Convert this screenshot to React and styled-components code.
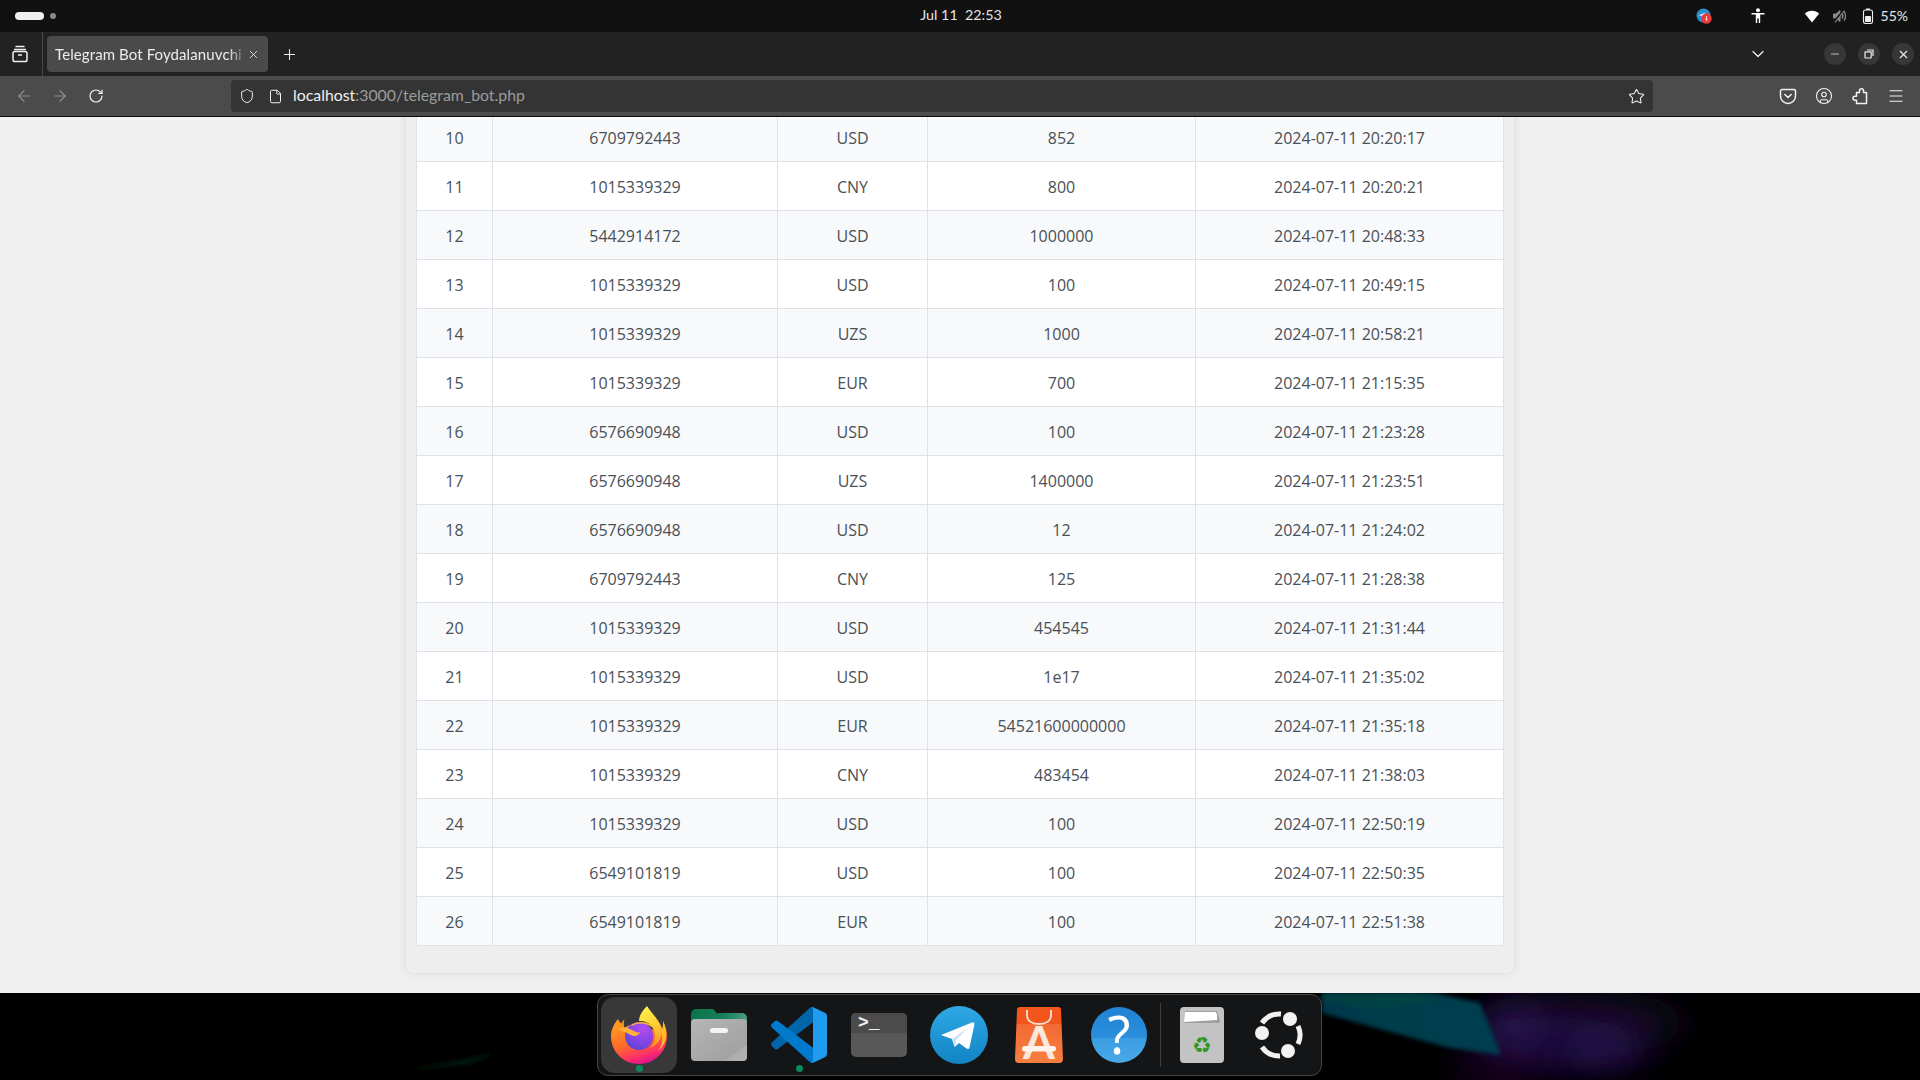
import React from 'react';
import styled, { createGlobalStyle } from 'styled-components';
import { ArrowLeft, ArrowRight, RotateCw, Shield, File, Star, Menu, Minus, X, Plus, ChevronDown, CircleUser } from 'lucide-react';

const GlobalStyle = createGlobalStyle`
  html, body {
    margin: 0;
    padding: 0;
    background: #000;
  }
`;

const Screen = styled.div`
  width: 1920px;
  height: 1080px;
  display: flex;
  flex-direction: column;
  overflow: hidden;
  font-family: "Noto Sans", sans-serif;
`;

/* gnome top bar */
const TopBar = styled.header`
  height: 32px;
  flex: none;
  background: #111;
  display: grid;
  grid-template-columns: 1fr auto 1fr;
  align-items: center;
  color: #e4e4e4;
`;

const Workspaces = styled.div`
  display: flex;
  align-items: center;
  gap: 6px;
  padding-left: 15px;
`;

const Pill = styled.span`
  width: 29px;
  height: 8px;
  border-radius: 4px;
  background: #eee;
`;

const Dot = styled.span`
  width: 6px;
  height: 6px;
  border-radius: 50%;
  background: #8a8a8a;
`;

const Clock = styled.div`
  font-family: "Lato", sans-serif;
  font-size: 14.3px;
  white-space: pre;
  position: relative;
  top: -2px;
  left: 1px;
`;

const Tray = styled.div`
  display: flex;
  align-items: center;
  justify-content: flex-end;
  padding-right: 12px;
`;

const TraySlot = styled.span`
  width: 16px;
  height: 16px;
  display: flex;
  margin-left: ${p => p.$gap}px;
`;

const Battery = styled.span`
  font-family: "Lato", sans-serif;
  font-size: 14px;
  margin-left: 5px;
  color: #e8e8e8;
  position: relative;
  top: -1px;
`;

/* firefox tab strip */
const TabStrip = styled.div`
  height: 44px;
  flex: none;
  background: #222;
  display: flex;
  align-items: center;
  color: #eee;
`;

const ViewButton = styled.div`
  width: 43px;
  height: 44px;
  display: flex;
  align-items: center;
  justify-content: center;
  padding-right: 3px;
  box-sizing: border-box;
  border-right: 1px solid #494949;
`;

const Tab = styled.div`
  width: 221px;
  height: 36px;
  margin-left: 4px;
  border-radius: 4px;
  background: #4a4a4a;
  display: flex;
  align-items: center;
  padding: 0 8px;
  box-sizing: border-box;
`;

const TabTitle = styled.span`
  flex: 1;
  overflow: hidden;
  white-space: nowrap;
  font-family: "Lato", sans-serif;
  font-size: 15px;
  letter-spacing: 0.1px;
  color: #ececec;
  -webkit-mask-image: linear-gradient(to right, #000 90%, transparent);
  mask-image: linear-gradient(to right, #000 90%, transparent);
`;

const NewTab = styled.div`
  width: 36px;
  height: 36px;
  margin-left: 3px;
  display: flex;
  align-items: center;
  justify-content: center;
`;

const Spring = styled.div`
  flex: 1;
`;

const TabList = styled.div`
  width: 36px;
  height: 36px;
  margin-right: 48px;
  display: flex;
  align-items: center;
  justify-content: center;
`;

const WinControls = styled.div`
  display: flex;
  gap: 12px;
  padding-right: 6px;
`;

const WinButton = styled.div`
  width: 22px;
  height: 22px;
  border-radius: 50%;
  background: #373737;
  display: flex;
  align-items: center;
  justify-content: center;
`;

/* nav bar */
const NavBar = styled.div`
  height: 41px;
  flex: none;
  box-sizing: border-box;
  background: #4b4b4b;
  border-bottom: 1px solid #0c0c0c;
  display: flex;
  align-items: center;
  padding-left: 6px;
  color: #f2f2f2;
`;

const NavButton = styled.div`
  width: 36px;
  height: 36px;
  display: flex;
  align-items: center;
  justify-content: center;
  color: ${p => (p.$off ? '#8f8f8f' : '#f2f2f2')};
`;

const UrlBar = styled.div`
  width: 1422px;
  height: 32px;
  margin-left: 117px;
  margin-right: 117px;
  border-radius: 4px;
  background: #343434;
  display: flex;
  align-items: center;
  padding: 0 8px 0 7px;
  box-sizing: border-box;
`;

const UrlIcon = styled.span`
  width: 18px;
  display: flex;
  justify-content: center;
  margin-right: ${p => p.$gap || 0}px;
`;

const UrlText = styled.div`
  flex: 1;
  font-family: "Lato", sans-serif;
  font-size: 15.85px;
  line-height: 20px;
  padding-bottom: 2px;
  color: #9c9c9c;
  white-space: nowrap;
  b {
    font-weight: 400;
    color: #f0f0f0;
  }
`;

/* page */
const Viewport = styled.main`
  flex: 1;
  min-height: 0;
  overflow: hidden;
  background: #f0f0f0;
`;

const Card = styled.section`
  width: 1108px;
  margin: -5px auto 0;
  padding: 0 11px 27px 10px;
  box-sizing: border-box;
  background: #eee;
  border-radius: 0 0 8px 8px;
  box-shadow: 0 0 10px rgba(0, 0, 0, 0.1);
`;

const Table = styled.table`
  width: 1087px;
  table-layout: fixed;
  border-collapse: collapse;
  font-family: "Open Sans", sans-serif;
  font-size: 16px;
  color: #495057;
`;

const Row = styled.tr`
  height: 49px;
  background: ${p => (p.$striped ? '#f8f9fa' : '#fff')};
`;

const Cell = styled.td`
  padding: 2px 0 0;
  text-align: center;
  border: 1px solid #dee2e6;
`;

/* dock */
const DockStrip = styled.footer`
  position: relative;
  height: 87px;
  flex: none;
  background: #000;
  overflow: hidden;
`;

const Wallpaper = styled.svg`
  position: absolute;
  inset: 0;
`;

const Dock = styled.nav`
  position: absolute;
  left: 597px;
  top: 1px;
  width: 725px;
  height: 82px;
  box-sizing: border-box;
  padding: 1px;
  display: flex;
  align-items: center;
  background: #141516;
  border: 1px solid #454545;
  border-radius: 11px;
`;

const DockItem = styled.div`
  position: relative;
  width: 80px;
  height: 76px;
  flex: none;
  display: flex;
  align-items: center;
  justify-content: center;
  margin-left: ${p => p.$shift || 0}px;
  &::before {
    content: '';
    position: absolute;
    left: 2px;
    right: 2px;
    top: 0;
    bottom: 0;
    border-radius: 14px;
    background: ${p => (p.$active ? '#383838' : 'transparent')};
  }
  svg {
    position: relative;
    overflow: visible;
  }
`;

const Running = styled.span`
  position: absolute;
  left: 37px;
  bottom: 1px;
  width: 7px;
  height: 7px;
  border-radius: 50%;
  background: #0a8a5c;
`;

const DockSep = styled.div`
  width: 1px;
  height: 64px;
  flex: none;
  margin: 0 1px;
  background: #3d3d3d;
`;

const rows = [
  [10, '6709792443', 'USD', '852', '2024-07-11 20:20:17'],
  [11, '1015339329', 'CNY', '800', '2024-07-11 20:20:21'],
  [12, '5442914172', 'USD', '1000000', '2024-07-11 20:48:33'],
  [13, '1015339329', 'USD', '100', '2024-07-11 20:49:15'],
  [14, '1015339329', 'UZS', '1000', '2024-07-11 20:58:21'],
  [15, '1015339329', 'EUR', '700', '2024-07-11 21:15:35'],
  [16, '6576690948', 'USD', '100', '2024-07-11 21:23:28'],
  [17, '6576690948', 'UZS', '1400000', '2024-07-11 21:23:51'],
  [18, '6576690948', 'USD', '12', '2024-07-11 21:24:02'],
  [19, '6709792443', 'CNY', '125', '2024-07-11 21:28:38'],
  [20, '1015339329', 'USD', '454545', '2024-07-11 21:31:44'],
  [21, '1015339329', 'USD', '1e17', '2024-07-11 21:35:02'],
  [22, '1015339329', 'EUR', '54521600000000', '2024-07-11 21:35:18'],
  [23, '1015339329', 'CNY', '483454', '2024-07-11 21:38:03'],
  [24, '1015339329', 'USD', '100', '2024-07-11 22:50:19'],
  [25, '6549101819', 'USD', '100', '2024-07-11 22:50:35'],
  [26, '6549101819', 'EUR', '100', '2024-07-11 22:51:38'],
];

const colWidths = [76, 285, 150, 268, 308];

function TelegramTray() {
  return (
    <svg width="16" height="16" viewBox="0 0 16 16">
      <circle cx="7.5" cy="7.5" r="7" fill="#2a8fd0" />
      <path d="M2.5 7.5 9 4.8 8 9 6.6 7.8z" fill="#fff" />
      <circle cx="10.5" cy="10.5" r="5.2" fill="#e93a3a" />
      <path d="M10.5 8v5M9.2 11h2.6" stroke="#ffc9c9" strokeWidth="1" fill="none" />
    </svg>
  );
}

function PersonTray() {
  return (
    <svg width="16" height="16" viewBox="0 0 16 16" fill="#fff">
      <circle cx="8" cy="2.2" r="2" />
      <path d="M1.5 5h13v1.6H10.2V15H8.8v-4.5H7.2V15H5.8V6.6H1.5z" />
    </svg>
  );
}

function WifiTray() {
  return (
    <svg width="16" height="16" viewBox="0 0 16 16" fill="#fff">
      <path d="M8 14.5 0.8 5.6C2.6 3.9 5.2 2.8 8 2.8s5.4 1.1 7.2 2.8z" />
    </svg>
  );
}

function MuteTray() {
  return (
    <svg width="16" height="16" viewBox="0 0 16 16" fill="none" stroke="#8a8a8a">
      <path d="M1.5 6h2.6L8 2.5v11L4.1 10H1.5z" fill="#8a8a8a" />
      <path d="M10 5.5c1 1.4 1 3.6 0 5M12 3.5c2 2.5 2 6.5 0 9" strokeWidth="1.3" />
      <path d="M2 14 12 2" stroke="#111" strokeWidth="2" />
      <path d="M3 14.5 12.5 2.5" strokeWidth="1.2" />
    </svg>
  );
}

function BatteryTray() {
  return (
    <svg width="16" height="16" viewBox="0 0 16 16" fill="none">
      <rect x="3.5" y="2" width="9" height="13.5" rx="2" stroke="#eee" strokeWidth="1.1" />
      <rect x="6" y="0.5" width="4" height="1.5" fill="#eee" />
      <rect x="5" y="8" width="6" height="6" rx="0.8" fill="#eee" />
    </svg>
  );
}

function ViewIcon() {
  return (
    <svg width="18" height="18" viewBox="0 0 18 18" fill="none" stroke="#f0f0f0" strokeWidth="1.5">
      <path d="M4.5 1.5h9" />
      <path d="M3 4.5h12" />
      <rect x="2" y="6.5" width="14" height="10" rx="1.8" />
      <path d="M7 10h4" />
    </svg>
  );
}

function RestoreIcon() {
  return (
    <svg width="10" height="10" viewBox="0 0 10 10" fill="none" stroke="#eee" strokeWidth="1.2">
      <rect x="1" y="2.8" width="6.2" height="6.2" rx="0.5" />
      <path d="M3 1h6v6" />
    </svg>
  );
}

function PocketIcon() {
  return (
    <svg width="18" height="18" viewBox="0 0 18 18" fill="none" stroke="#f2f2f2" strokeWidth="1.5">
      <path d="M3 2.5h12A1.5 1.5 0 0 1 16.5 4v5a7.5 7.5 0 0 1-15 0V4A1.5 1.5 0 0 1 3 2.5z" />
      <path d="M5.8 7.5 9 10.5l3.2-3" strokeLinecap="round" />
    </svg>
  );
}

function PuzzleIcon() {
  return (
    <svg width="18" height="18" viewBox="0 0 18 18" fill="none" stroke="#f2f2f2" strokeWidth="1.5" strokeLinejoin="round">
      <path d="M5.5 5.5h3V3.7a2 2 0 1 1 4 0v1.8h3v11H5.5v-3.3H4a2 2 0 1 1 0-4h1.5z" />
    </svg>
  );
}

function Firefox() {
  return (
    <svg width="58" height="60" viewBox="0 0 58 60">
      <defs>
        <linearGradient id="ffBody" x1="0.2" y1="0.1" x2="0.55" y2="1">
          <stop offset="0" stopColor="#ff9a1f" />
          <stop offset="0.5" stopColor="#ff6a2a" />
          <stop offset="0.82" stopColor="#ff2f6a" />
          <stop offset="1" stopColor="#e0148c" />
        </linearGradient>
        <linearGradient id="ffFlame" x1="0.4" y1="0" x2="0.7" y2="1">
          <stop offset="0" stopColor="#fff04f" />
          <stop offset="0.55" stopColor="#ffc92e" />
          <stop offset="1" stopColor="#ff8f24" />
        </linearGradient>
        <radialGradient id="ffGlobe" cx="0.65" cy="0.25" r="0.9">
          <stop offset="0" stopColor="#b24cf0" />
          <stop offset="0.55" stopColor="#8244e6" />
          <stop offset="1" stopColor="#4d48cc" />
        </radialGradient>
      </defs>
      <path d="M8 14C3 20 1 26 1 31c0 16 12.5 28 28 28s28-12 28-28c0-5-1.5-10-4-15 .4 4-.2 7-1.5 10L20 20c-2 .5-4 1.5-5.5 3-1-3-1-6 0-9-1 1-2.5 3-3 4.5C10 17.5 9 16 8 14z" fill="url(#ffBody)" />
      <path d="M37 1c-5 5-8 10-8 15 9-1 16 6 16 15 0 5-2 9-5 12 7-3 12-9 12-17 0-1 0-2-.2-3C49 15 43 10 37 1z" fill="url(#ffFlame)" />
      <path d="M53 16c2.5 5 4 11 3 17-1 5-4 10-8 13 4-5 5-11 3.5-20 1-3 1.8-6 1.5-10z" fill="#ffb92e" />
      <circle cx="29" cy="31" r="14" fill="url(#ffGlobe)" />
      <path d="M21 20c5-3 11-4 16-2 4 1 7 4 9 8-3-4-7-6-11-7-5-1-10 0-13 2z" fill="#ffb52e" />
      <path d="M8 24c4-1.5 8-2 11-.5 2 1 4 2 6 3 2 1 4 1.5 5.5 0-1 3-4 5-7 4.5-2-.3-3.5-1.5-5.5-2.5-3-1.5-6-2.5-10-4.5z" fill="#ffb13a" />
    </svg>
  );
}

function FilesIcon() {
  return (
    <svg width="56" height="52" viewBox="0 0 56 52">
      <defs>
        <linearGradient id="folderBody" x1="0" y1="0" x2="1" y2="1">
          <stop offset="0" stopColor="#b6b6b6" />
          <stop offset="0.8" stopColor="#a2a2a2" />
          <stop offset="0.8" stopColor="#acacac" />
          <stop offset="1" stopColor="#b4b4b4" />
        </linearGradient>
        <linearGradient id="folderBack" x1="0" y1="0" x2="1" y2="0">
          <stop offset="0" stopColor="#0b7349" />
          <stop offset="0.6" stopColor="#16805a" />
          <stop offset="1" stopColor="#4a9c80" />
        </linearGradient>
      </defs>
      <path d="M0 5a5 5 0 0 1 5-5h16c2 0 3 2 4 3.5S27 4 29 4h22a5 5 0 0 1 5 5v12H0z" fill="url(#folderBack)" />
      <rect y="10" width="56" height="42" rx="4" fill="url(#folderBody)" />
      <rect x="19" y="19" width="18" height="5" rx="2.5" fill="#f4f4f4" />
    </svg>
  );
}

function VsCode() {
  return (
    <svg width="56" height="56" viewBox="0 0 100 100" preserveAspectRatio="none">
      <path d="M96.5 10.8 75.9.9c-2.4-1.2-5.2-.7-7.1 1.2L1.4 63.6c-1.8 1.7-1.8 4.5 0 6.2l5.5 5c1.5 1.3 3.7 1.4 5.3.2L93.4 13.2c2.7-2.1 6.6-.1 6.6 3.3v-.2c0-2.4-1.4-4.6-3.5-5.5z" fill="#0065a9" />
      <path d="M96.5 89.2 75.9 99.1c-2.4 1.2-5.2.7-7.1-1.2L1.4 36.4c-1.8-1.7-1.8-4.5 0-6.2l5.5-5c1.5-1.3 3.7-1.4 5.3-.2L93.4 86.8c2.7 2.1 6.6.1 6.6-3.3v.2c0 2.4-1.4 4.6-3.5 5.5z" fill="#007acc" />
      <path d="M75.9 99.1c-2.4 1.2-5.2.6-7.1-1.2 2.3 2.3 6.2.7 6.2-2.6V4.7c0-3.3-3.9-4.9-6.2-2.6 1.9-1.9 4.7-2.4 7.1-1.2l20.6 9.9c2.2 1 3.5 3.2 3.5 5.6v67.2c0 2.4-1.4 4.6-3.5 5.6z" fill="#1f9cf0" />
    </svg>
  );
}

function TerminalIcon() {
  return (
    <svg width="56" height="44" viewBox="0 0 56 44">
      <rect width="56" height="44" rx="5" fill="#585858" />
      <path d="M5 0h46a5 5 0 0 1 5 5v15H0V5a5 5 0 0 1 5-5z" fill="#4b4b4b" />
      <text x="7" y="15" fontFamily="Liberation Mono, monospace" fontSize="18" fontWeight="700" fill="#f2f2f2">&gt;_</text>
    </svg>
  );
}

function TelegramIcon() {
  return (
    <svg width="58" height="58" viewBox="0 0 58 58">
      <defs>
        <linearGradient id="tgBg" x1="0.5" y1="0" x2="0.5" y2="1">
          <stop offset="0" stopColor="#2fa8e4" />
          <stop offset="1" stopColor="#1284c4" />
        </linearGradient>
      </defs>
      <circle cx="29" cy="29" r="29" fill="url(#tgBg)" />
      <path d="M11 29 42 16.5c1.5-.5 2.7.4 2.4 2L39.5 41.5c-.3 1.5-1.7 1.9-2.9 1.1L29 37l-3.5 3.3c-.5.5-1 .5-1.2-.2L22 33z" fill="#fff" />
      <path d="M22 33 37 22.5 26 34.5l-.5 5.8z" fill="#c9e3f2" />
    </svg>
  );
}

function AppStoreIcon() {
  return (
    <svg width="48" height="56" viewBox="0 0 48 56">
      <defs>
        <linearGradient id="storeBg" x1="0.5" y1="0" x2="0.5" y2="1">
          <stop offset="0" stopColor="#f4551c" />
          <stop offset="0.3" stopColor="#f4551c" />
          <stop offset="0.3" stopColor="#f26a33" />
          <stop offset="1" stopColor="#f67f41" />
        </linearGradient>
      </defs>
      <path d="M5 0h38a3 3 0 0 1 3 3l2 49a4 4 0 0 1-4 4H4a4 4 0 0 1-4-4L2 3a3 3 0 0 1 3-3z" fill="url(#storeBg)" />
      <path d="M12 3v5c0 6 5 9 12 9s12-3 12-9V3" fill="none" stroke="#f3e0d6" strokeWidth="1.8" />
      <text x="24" y="52" textAnchor="middle" fontFamily="Lato, sans-serif" fontSize="46" fontWeight="700" fill="#fbe6da">A</text>
      <rect x="7" y="39" width="34" height="5.5" rx="2.7" fill="#fff3ec" />
    </svg>
  );
}

function HelpIcon() {
  return (
    <svg width="56" height="56" viewBox="0 0 56 56">
      <defs>
        <linearGradient id="helpBg" x1="0.5" y1="0" x2="0.5" y2="1">
          <stop offset="0" stopColor="#1f82d4" />
          <stop offset="0.55" stopColor="#2b8fdc" />
          <stop offset="0.55" stopColor="#3b9de2" />
          <stop offset="1" stopColor="#4aa9e8" />
        </linearGradient>
      </defs>
      <circle cx="28" cy="28" r="28" fill="url(#helpBg)" />
      <text x="28" y="47" textAnchor="middle" fontFamily="Noto Sans, sans-serif" fontSize="52" fill="#fff">?</text>
    </svg>
  );
}

function TrashIcon() {
  return (
    <svg width="44" height="56" viewBox="0 0 44 56">
      <rect width="44" height="56" rx="4" fill="#c3c3c3" />
      <path d="M5 4h32l3 10-1 2H4z" fill="#9f9f9f" />
      <path d="M5 5h30c1 0 1 1 2 2v6c-10 1-22 1-33 2z" fill="#fff" />
      <text x="22" y="46" textAnchor="middle" fontFamily="DejaVu Sans, sans-serif" fontSize="22" fill="#2f962a">♻</text>
    </svg>
  );
}

function UbuntuIcon() {
  return (
    <svg width="58" height="58" viewBox="0 0 58 58">
      <g fill="none" stroke="#f2f2f2" strokeWidth="5">
        <path d="M12 17A21 21 0 0 1 31 8" />
        <path d="M48 20A21 21 0 0 1 48 38" />
        <path d="M30 50A21 21 0 0 1 12 41" />
      </g>
      <circle cx="40" cy="13" r="7" fill="#f2f2f2" />
      <circle cx="12" cy="27" r="7" fill="#f2f2f2" />
      <circle cx="38" cy="45" r="7" fill="#f2f2f2" />
    </svg>
  );
}

export default function App() {
  return (
    <>
      <GlobalStyle />
      <Screen>
        <TopBar>
          <Workspaces>
            <Pill />
            <Dot />
          </Workspaces>
          <Clock>Jul 11  22:53</Clock>
          <Tray>
            <TraySlot $gap={0}><TelegramTray /></TraySlot>
            <TraySlot $gap={38}><PersonTray /></TraySlot>
            <TraySlot $gap={38}><WifiTray /></TraySlot>
            <TraySlot $gap={12}><MuteTray /></TraySlot>
            <TraySlot $gap={12}><BatteryTray /></TraySlot>
            <Battery>55%</Battery>
          </Tray>
        </TopBar>

        <TabStrip>
          <ViewButton><ViewIcon /></ViewButton>
          <Tab>
            <TabTitle>Telegram Bot Foydalanuvchi</TabTitle>
            <X size={13} strokeWidth={1.5} color="#eee" />
          </Tab>
          <NewTab><Plus size={17} strokeWidth={1.5} /></NewTab>
          <Spring />
          <TabList><ChevronDown size={20} strokeWidth={1.5} /></TabList>
          <WinControls>
            <WinButton><Minus size={12} strokeWidth={1.5} /></WinButton>
            <WinButton><RestoreIcon /></WinButton>
            <WinButton><X size={13} strokeWidth={2} /></WinButton>
          </WinControls>
        </TabStrip>

        <NavBar>
          <NavButton $off><ArrowLeft size={18} strokeWidth={1.5} /></NavButton>
          <NavButton $off><ArrowRight size={18} strokeWidth={1.5} /></NavButton>
          <NavButton><RotateCw size={16} strokeWidth={1.8} /></NavButton>
          <UrlBar>
            <UrlIcon $gap={10}><Shield size={16} strokeWidth={1.5} /></UrlIcon>
            <UrlIcon $gap={9}><File size={15} strokeWidth={1.6} /></UrlIcon>
            <UrlText><b>localhost</b>:3000/telegram_bot.php</UrlText>
            <Star size={17} strokeWidth={1.5} />
          </UrlBar>
          <NavButton><PocketIcon /></NavButton>
          <NavButton><CircleUser size={18} strokeWidth={1.5} /></NavButton>
          <NavButton><PuzzleIcon /></NavButton>
          <NavButton><Menu size={18} strokeWidth={1.5} /></NavButton>
        </NavBar>

        <Viewport>
          <Card>
            <Table>
              <colgroup>
                {colWidths.map((w, i) => <col key={i} style={{ width: w }} />)}
              </colgroup>
              <tbody>
                {rows.map(row => (
                  <Row key={row[0]} $striped={row[0] % 2 === 0}>
                    {row.map((value, i) => <Cell key={i}>{value}</Cell>)}
                  </Row>
                ))}
              </tbody>
            </Table>
          </Card>
        </Viewport>

        <DockStrip>
          <Wallpaper width="1920" height="87" viewBox="0 0 1920 87">
            <defs>
              <filter id="soft" x="-50%" y="-100%" width="200%" height="300%"><feGaussianBlur stdDeviation="18" /></filter>
              <filter id="softer"><feGaussianBlur stdDeviation="2" /></filter>
              <linearGradient id="teal" x1="0" y1="0" x2="1" y2="0">
                <stop offset="0" stopColor="#03384c" />
                <stop offset="0.5" stopColor="#053e4c" />
                <stop offset="1" stopColor="#043c50" />
              </linearGradient>
            </defs>
            <ellipse cx="1580" cy="30" rx="105" ry="34" fill="#181020" opacity="0.9" filter="url(#soft)" />
            <ellipse cx="1550" cy="50" rx="90" ry="26" fill="#24104c" opacity="0.7" filter="url(#soft)" />
            <ellipse cx="1515" cy="32" rx="30" ry="16" fill="#3a1a78" opacity="0.6" filter="url(#soft)" />
            <ellipse cx="1605" cy="56" rx="46" ry="16" fill="#301468" opacity="0.55" filter="url(#soft)" />
            <ellipse cx="1500" cy="80" rx="50" ry="12" fill="#3a0640" opacity="0.55" filter="url(#soft)" />
            <path d="M1322 0H1434L1480 10 1501 62 1446 54 1380 36 1322 20z" fill="url(#teal)" filter="url(#softer)" />
            <path d="M1322 0H1420L1440 8 1370 16 1322 8z" fill="#064640" opacity="0.6" filter="url(#softer)" />
            <path d="M400 78 500 58 470 72z" fill="#031208" filter="url(#softer)" />
          </Wallpaper>
          <Dock>
            <DockItem $active><Firefox /><Running /></DockItem>
            <DockItem><FilesIcon /></DockItem>
            <DockItem><VsCode /><Running /></DockItem>
            <DockItem><TerminalIcon /></DockItem>
            <DockItem><TelegramIcon /></DockItem>
            <DockItem><AppStoreIcon /></DockItem>
            <DockItem><HelpIcon /></DockItem>
            <DockSep />
            <DockItem><TrashIcon /></DockItem>
            <DockItem $shift={-3}><UbuntuIcon /></DockItem>
          </Dock>
        </DockStrip>
      </Screen>
    </>
  );
}
